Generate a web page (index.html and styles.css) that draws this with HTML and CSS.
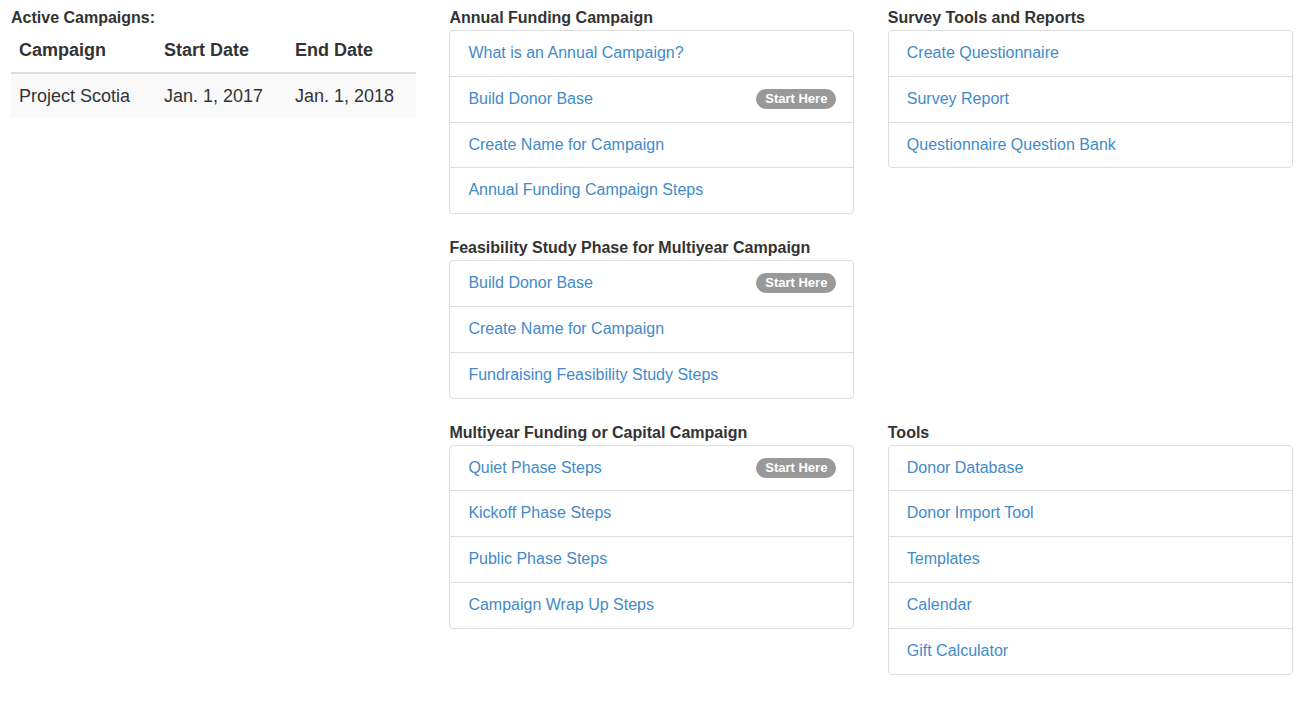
FILE: index.html
```html
<!DOCTYPE html>
<html lang="en">
<head>
<meta charset="utf-8">
<title>Campaigns</title>
<link rel="stylesheet" href="styles.css">
</head>
<body>
<div class="page">
  <section class="section s-active">
    <div class="heading">Active Campaigns:</div>
    <table class="campaigns">
      <colgroup><col class="c1"><col class="c2"><col class="c3"></colgroup>
      <thead>
        <tr><th>Campaign</th><th>Start Date</th><th>End Date</th></tr>
      </thead>
      <tbody>
        <tr><td>Project Scotia</td><td>Jan. 1, 2017</td><td>Jan. 1, 2018</td></tr>
      </tbody>
    </table>
  </section>

  <section class="section s-annual">
    <div class="heading">Annual Funding Campaign</div>
    <div class="list">
      <a class="item" href="#">What is an Annual Campaign?</a>
      <a class="item" href="#">Build Donor Base<span class="badge">Start Here</span></a>
      <a class="item" href="#">Create Name for Campaign</a>
      <a class="item" href="#">Annual Funding Campaign Steps</a>
    </div>
  </section>

  <section class="section s-survey">
    <div class="heading">Survey Tools and Reports</div>
    <div class="list">
      <a class="item" href="#">Create Questionnaire</a>
      <a class="item" href="#">Survey Report</a>
      <a class="item" href="#">Questionnaire Question Bank</a>
    </div>
  </section>

  <section class="section s-feas">
    <div class="heading">Feasibility Study Phase for Multiyear Campaign</div>
    <div class="list">
      <a class="item" href="#">Build Donor Base<span class="badge">Start Here</span></a>
      <a class="item" href="#">Create Name for Campaign</a>
      <a class="item" href="#">Fundraising Feasibility Study Steps</a>
    </div>
  </section>

  <section class="section s-multi">
    <div class="heading">Multiyear Funding or Capital Campaign</div>
    <div class="list">
      <a class="item" href="#">Quiet Phase Steps<span class="badge">Start Here</span></a>
      <a class="item" href="#">Kickoff Phase Steps</a>
      <a class="item" href="#">Public Phase Steps</a>
      <a class="item" href="#">Campaign Wrap Up Steps</a>
    </div>
  </section>

  <section class="section s-tools">
    <div class="heading">Tools</div>
    <div class="list">
      <a class="item" href="#">Donor Database</a>
      <a class="item" href="#">Donor Import Tool</a>
      <a class="item" href="#">Templates</a>
      <a class="item" href="#">Calendar</a>
      <a class="item" href="#">Gift Calculator</a>
    </div>
  </section>
</div>
</body>
</html>
```

FILE: styles.css
```css
html, body {
  margin: 0;
  padding: 0;
  background: #fff;
}

body {
  font-family: "Liberation Sans", Arial, Helvetica, sans-serif;
  font-size: 16px;
  line-height: 1.42857;
  color: #333;
}

.page {
  display: grid;
  grid-template-columns: 405px 405px 405px;
  column-gap: 33.4px;
  row-gap: 23px;
  align-items: start;
  padding: 7px 0 0 11px;
}

.s-active { grid-column: 1; grid-row: 1; }
.s-annual { grid-column: 2; grid-row: 1; }
.s-survey { grid-column: 3; grid-row: 1; }
.s-feas   { grid-column: 2; grid-row: 2; }
.s-multi  { grid-column: 2; grid-row: 3; }
.s-tools  { grid-column: 3; grid-row: 3; }

.heading {
  font-weight: bold;
  font-size: 16px;
  line-height: 22.86px;
  color: #333;
}

.list {
  display: flex;
  flex-direction: column;
  border: 1px solid #ddd;
  border-radius: 4px;
  background: #fff;
}

.item {
  display: flex;
  align-items: center;
  justify-content: space-between;
  padding: 11px 17px 11px 18px;
  font-size: 16px;
  line-height: 22.86px;
  color: #428bca;
  text-decoration: none;
  border-top: 1px solid #ddd;
}

.item:first-child {
  border-top: 0;
}

.badge {
  display: inline-block;
  background: #999;
  color: #fff;
  font-weight: bold;
  font-size: 13px;
  line-height: 14px;
  padding: 3px 9px;
  border-radius: 10px;
  margin-top: -1px;
}

.campaigns {
  width: 100%;
  border-collapse: collapse;
  font-size: 18px;
}

.campaigns .c1 { width: 145px; }
.campaigns .c2 { width: 131px; }

.campaigns th {
  text-align: left;
  font-weight: bold;
  padding: 8px;
  line-height: 25.7px;
  border-bottom: 2px solid #ddd;
}

.campaigns td {
  padding: 10px 8px 9px;
  line-height: 25.7px;
  background: #f9f9f9;
}
```
